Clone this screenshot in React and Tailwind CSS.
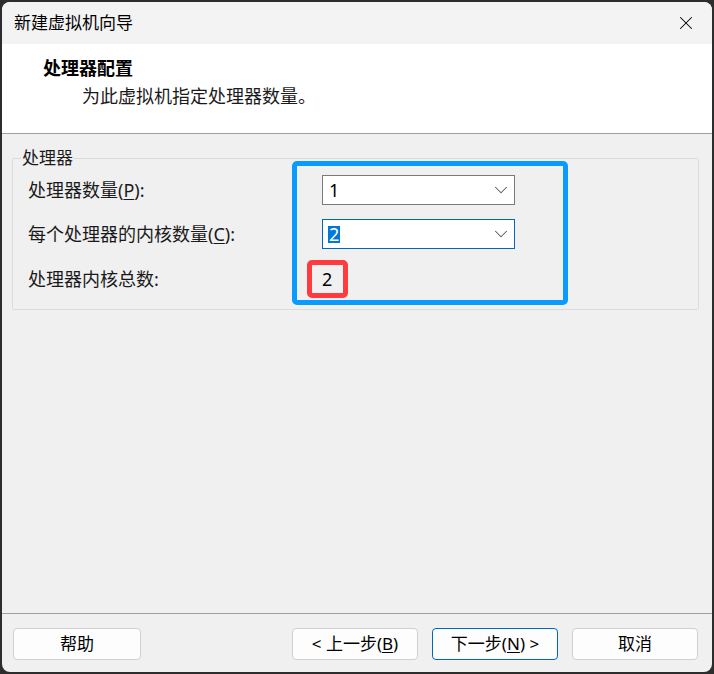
import { ChevronDown, X } from 'lucide-react';

const Combo = ({ value, focused }) => (
  <div
    className={`flex items-center justify-between w-[193px] h-[30px] bg-white pl-[5px] pr-[2px] border ${
      focused ? 'border-[#0067c0]' : 'border-[#7a7a7a]'
    }`}
  >
    <span
      className={`text-[18px] leading-[17px] px-[1px] ${
        focused ? 'bg-[#0078d7] text-white' : 'text-black'
      }`}
    >
      {value}
    </span>
    <ChevronDown size={22} strokeWidth={1.1} className="text-[#555555]" />
  </div>
);

const Key = ({ children }) => <span className="underline underline-offset-2">{children}</span>;

const Btn = ({ children, primary, w = 'w-[126px]' }) => (
  <button
    className={`${w} h-[32px] rounded-[4px] bg-[#fdfdfd] text-[17px] leading-[24px] text-black border ${
      primary ? 'border-[#0067c0]' : 'border-[#d0d0d0]'
    }`}
  >
    {children}
  </button>
);

export default function App() {
  return (
    <div className="w-[714px] h-[674px] bg-[#2d2d2d] p-[2px] font-['Noto_Sans','Noto_Sans_CJK_SC',sans-serif]">
      <div className="relative w-[710px] h-[670px] rounded-[8px] overflow-hidden bg-[#f0f0f0] flex flex-col">
        {/* Title bar */}
        <div className="h-[42px] shrink-0 bg-[#f3f3f3] flex items-center justify-between pl-[12px] pr-[15px]">
          <span className="text-[17px] leading-[24px] text-black">新建虚拟机向导</span>
          <X size={22} strokeWidth={1.1} className="text-black" />
        </div>

        {/* Header */}
        <div className="h-[90px] shrink-0 bg-white border-b border-[#a0a0a0] pl-[41px] pt-[12px]">
          <div className="text-[18px] leading-[24px] font-bold text-black">处理器配置</div>
          <div className="mt-[4px] pl-[39px] text-[18px] leading-[24px] text-[#1a1a1a]">为此虚拟机指定处理器数量。</div>
        </div>

        {/* Body */}
        <div className="flex-1 pl-[10px] pr-[13px] pt-[12px]">
          <fieldset className="border border-[#dcdcdc] rounded-[2px] pl-[15px] pr-[15px] pt-[5px] pb-[14px]">
            <legend className="ml-[-7px] px-[1px] text-[17px] leading-[24px] text-[#1a1a1a]">处理器</legend>
            <div className="flex flex-col gap-[14px] text-[18px] leading-[24px] text-[#1a1a1a]">
              <div className="flex items-center h-[30px]">
                <span className="w-[294px]">
                  处理器数量(<Key>P</Key>):
                </span>
                <Combo value="1" />
              </div>
              <div className="flex items-center h-[30px]">
                <span className="w-[294px]">
                  每个处理器的内核数量(<Key>C</Key>):
                </span>
                <Combo value="2" focused />
              </div>
              <div className="flex items-center h-[32px]">
                <span className="w-[294px]">处理器内核总数:</span>
                <span className="text-black">2</span>
              </div>
            </div>
          </fieldset>
        </div>

        {/* Footer */}
        <div className="h-[59px] shrink-0 border-t border-[#a0a0a0] flex items-center pl-[11px] pr-[14px] pt-[1px]">
          <Btn w="w-[128px]">帮助</Btn>
          <div className="flex-1" />
          <div className="flex gap-[14px]">
            <Btn>
              &lt; 上一步(<Key>B</Key>)
            </Btn>
            <Btn primary>
              下一步(<Key>N</Key>) &gt;
            </Btn>
            <Btn>取消</Btn>
          </div>
        </div>

        {/* Annotations */}
        <div className="absolute left-[290px] top-[159px] w-[276px] h-[144px] border-[5px] border-[#0a9bff] rounded-[5px] pointer-events-none" />
        <div className="absolute left-[305px] top-[258px] w-[41px] h-[38px] border-[5px] border-[#ff3b3f] rounded-[5px] pointer-events-none" />
      </div>
    </div>
  );
}
